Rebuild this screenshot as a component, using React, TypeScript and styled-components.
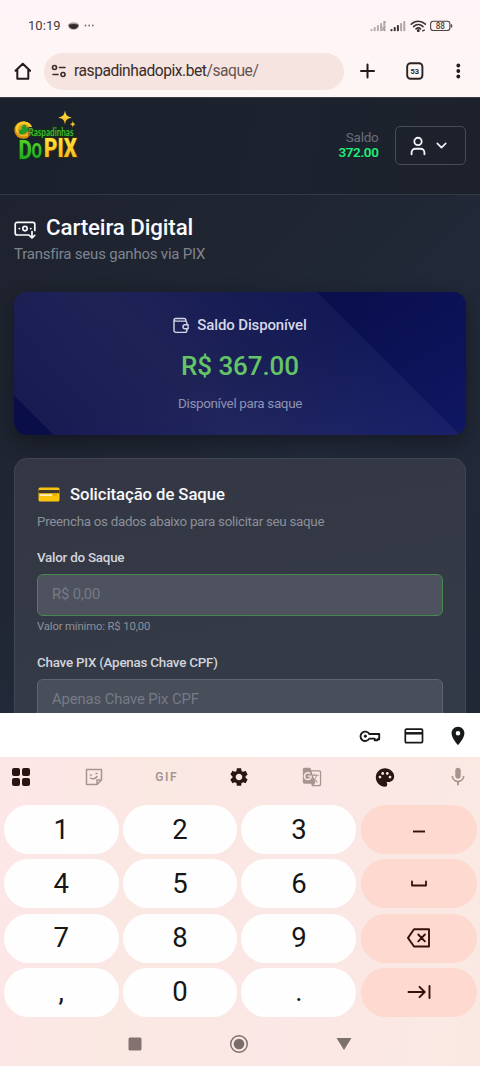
import React from "react";
import styled, { createGlobalStyle } from "styled-components";
import { User, ChevronDown } from "lucide-react";
import { MdLocationOn, MdSettings, MdGTranslate, MdPalette, MdMic } from "react-icons/md";

const GlobalStyle = createGlobalStyle`
  * { box-sizing: border-box; }
  body { margin: 0; font-family: Roboto, "Liberation Sans", sans-serif; }
`;

const Screen = styled.div`
  width: 480px;
  height: 1066px;
  display: flex;
  flex-direction: column;
  overflow: hidden;
  background: #fbe8e4;
`;

/* ---------- status bar and browser toolbar ---------- */
const Chrome = styled.div`
  height: 97px;
  flex: none;
  background: linear-gradient(#fff4f7, #fef6f5);
`;

const StatusBar = styled.div`
  height: 52px;
  display: flex;
  align-items: center;
  padding: 0 27px 0 28px;
  justify-content: space-between;
`;

const StatusGroup = styled.div<{ $gap: number }>`
  display: flex;
  align-items: center;
  gap: ${(p) => p.$gap}px;
`;

const Clock = styled.span`
  font-size: 13px;
  line-height: 16px;
  letter-spacing: 0.05px;
  color: #43383a;
`;

const AddressRow = styled.div`
  height: 38px;
  display: flex;
  align-items: center;
  padding-left: 13px;
`;

const AddressPill = styled.div`
  width: 300px;
  height: 37px;
  margin-left: 11px;
  border-radius: 19px;
  background: #f5e4df;
  display: flex;
  align-items: center;
  padding-left: 7px;
  gap: 7px;
`;

const Url = styled.span`
  font-size: 15.6px;
  letter-spacing: -0.46px;
  line-height: 20px;
  color: #3a2c2b;
`;
const UrlPath = styled.span`
  color: #66534f;
`;

const ToolbarActions = styled.div`
  flex: 1;
  display: flex;
  align-items: center;
  justify-content: space-between;
  padding: 0 18px 0 15px;
`;

/* ---------- web page ---------- */
const Page = styled.main`
  height: 616px;
  flex: none;
  overflow: hidden;
  background: linear-gradient(135deg, #1e222e 0%, #1f2531 35%, #222938 60%, #202735 100%);
`;

const SiteHeader = styled.header`
  height: 98px;
  border-top: 1px solid #3c3d44;
  border-bottom: 1px solid #323844;
  background: linear-gradient(100deg, #1b212c, #1c232e 60%, #1d212c);
  display: flex;
  align-items: flex-start;
  padding: 11px 14px 0;
`;

const HeaderRight = styled.div`
  margin-left: auto;
  margin-top: 17px;
  display: flex;
  align-items: center;
  gap: 16px;
`;

const Balance = styled.div`
  text-align: right;
  font-size: 13.5px;
  line-height: 15px;
  letter-spacing: -0.25px;
  color: #696e79;
  padding-bottom: 1px;
`;
const BalanceValue = styled.div`
  color: #1dee77;
  font-weight: 600;
  letter-spacing: -0.4px;
`;

const UserButton = styled.button`
  width: 71.5px;
  height: 39px;
  border: 1px solid #474c58;
  border-radius: 5px;
  background: transparent;
  color: #f4f5fa;
  display: flex;
  align-items: center;
  gap: 4px;
  padding: 0 0 0 11px;
`;

const Content = styled.div`
  padding: 19px 14px 0;
`;

const TitleRow = styled.div`
  display: flex;
  align-items: center;
  gap: 9px;
  height: 26px;
  color: #fafbff;
`;

const TitleIcon = styled.span`
  display: flex;
  padding-top: 6px;
`;

const Title = styled.h1`
  margin: 0;
  font-size: 22.3px;
  line-height: 26px;
  letter-spacing: -0.1px;
  font-weight: 500;
`;

const Subtitle = styled.p`
  margin: 4px 0 0;
  font-size: 15px;
  line-height: 20px;
  letter-spacing: -0.21px;
  color: #7f8490;
`;

const BalanceCard = styled.section`
  height: 143px;
  margin-top: 28px;
  border-radius: 13px;
  background:
    linear-gradient(45deg, transparent 6.6%, rgba(170, 160, 180, 0.09) 6.7%, rgba(200, 200, 190, 0.11) 38%, rgba(140, 150, 200, 0.07) 74.9%, transparent 75.1%),
    linear-gradient(160deg, transparent 50%, rgba(24, 32, 120, 0.4) 100%),
    linear-gradient(90deg, #0a0e48 0%, #090f4b 60%, #0b1154 100%);
  box-shadow: 0 7px 20px rgba(8, 9, 16, 0.45);
  display: flex;
  flex-direction: column;
  align-items: center;
`;

const BalanceLabel = styled.div`
  display: flex;
  align-items: center;
  gap: 8px;
  margin-top: 23px;
  font-size: 15px;
  line-height: 20px;
  letter-spacing: -0.13px;
  font-weight: 500;
  color: #d5d7e8;
`;
const BalanceAmount = styled.div`
  margin-top: 15px;
  font-size: 26px;
  line-height: 32px;
  letter-spacing: -0.1px;
  font-weight: 500;
  color: #65c466;
`;
const BalanceNote = styled.div`
  margin-top: 12px;
  font-size: 13.5px;
  line-height: 18px;
  letter-spacing: -0.38px;
  color: #8d91b0;
`;

const FormCard = styled.section`
  margin-top: 23px;
  height: 400px;
  border: 1px solid #414651;
  border-radius: 13px;
  background: linear-gradient(170deg, #343743, #343b48 70%);
  padding: 23px 22px 0;
`;

const FormTitleRow = styled.div`
  display: flex;
  align-items: center;
  gap: 10px;
  height: 25px;
  padding-left: 1px;
`;
const FormTitle = styled.h2`
  margin: 0;
  font-size: 16.7px;
  line-height: 25px;
  letter-spacing: -0.07px;
  font-weight: 500;
  color: #f8f9fd;
`;
const FormHint = styled.p`
  margin: 5px 0 0;
  font-size: 13.4px;
  line-height: 20px;
  letter-spacing: -0.3px;
  color: #8b8f9a;
`;
const Label = styled.label<{ $top: number }>`
  display: block;
  margin-top: ${(p) => p.$top}px;
  font-size: 13.4px;
  line-height: 18px;
  letter-spacing: -0.24px;
  font-weight: 500;
  color: #d2d4dc;
`;
const Field = styled.div<{ $active?: boolean }>`
  height: 42px;
  margin-top: 7px;
  border: 1px solid ${(p) => (p.$active ? "#43894e" : "#606571")};
  border-radius: 6px;
  background: ${(p) => (p.$active ? "#4e525e" : "#494e5b")};
  color: #767b86;
  font-size: 14.8px;
  line-height: 38px;
  letter-spacing: -0.1px;
  padding-left: 14px;
`;
const FieldNote = styled.div`
  margin-top: 3px;
  font-size: 11.3px;
  line-height: 16px;
  letter-spacing: -0.14px;
  color: #8d919c;
`;

/* ---------- keyboard ---------- */
const AutofillBar = styled.div`
  height: 44px;
  flex: none;
  background: #fff;
  display: flex;
  align-items: center;
  justify-content: flex-end;
  gap: 23px;
  padding-right: 11px;
  padding-top: 1px;
  color: #17191a;
`;

const Keyboard = styled.div`
  flex: 1;
  background: linear-gradient(100deg, #fde6e7, #fae8e3 30%, #fbe7e5 60%, #fae9e3);
`;

const KeyToolbar = styled.div`
  height: 40px;
  display: flex;
  align-items: center;
  justify-content: space-between;
  padding: 0 11px 0 10px;
`;
const ToolItem = styled.span<{ $dim?: boolean }>`
  width: 22px;
  display: flex;
  justify-content: center;
  color: ${(p) => (p.$dim ? "#a8948f" : "#2b1512")};
`;
const GifLabel = styled.span`
  font-size: 12px;
  font-weight: 600;
  letter-spacing: 1.5px;
`;

const KeyGrid = styled.div`
  display: grid;
  grid-template-columns: 114.5px 114.5px 115px 116px;
  grid-auto-rows: 49px;
  column-gap: 4.2px;
  row-gap: 5.3px;
  padding: 8px 0 0 4px;
`;
const Key = styled.div<{ $accent?: boolean }>`
  border-radius: 25px;
  background: ${(p) => (p.$accent ? "#fdd9cf" : "#fffefe")};
  color: ${(p) => (p.$accent ? "#35110c" : "#161617")};
  display: flex;
  align-items: center;
  justify-content: center;
  font-size: 27.5px;
  line-height: 48px;
`;

const NavBar = styled.div`
  height: 49px;
  margin-top: 3px;
  display: flex;
  align-items: center;
  justify-content: center;
  gap: 87px;
  padding-right: 1px;
`;

const stroke = {
  fill: "none",
  stroke: "currentColor",
  strokeLinecap: "round" as const,
  strokeLinejoin: "round" as const,
};

const SignalIcon = ({ dim }: { dim?: boolean }) => (
  <svg width="17" height="12" viewBox="0 0 17 12">
    {[0, 1, 2, 3, 4].map((i) => (
      <rect
        key={i}
        x={0.5 + i * 3.2}
        y={9 - i * 2}
        width="2"
        height={2.2 + i * 2}
        rx="0.8"
        fill={dim ? "#b9abae" : i < 3 ? "#3b3033" : "#b3a5a8"}
      />
    ))}
    {dim && <path d="M11.5 6.5l4 4.5M15.5 6.5l-4 4.5M13.5 2h2.5" stroke="#978a8d" strokeWidth="0.9" />}
  </svg>
);

const WifiIcon = () => (
  <svg width="17" height="12" viewBox="0 0 17 12" {...stroke} stroke="#3b3033" strokeWidth="1.6">
    <path d="M1.2 4.2C5.2 .2 11.2 .2 15.4 4.2M3.6 6.6c2.8-2.7 6.6-2.7 9.4 0M6 8.9c1.4-1.3 3.2-1.3 4.6 0" />
    <circle cx="8.3" cy="10.6" r="0.7" fill="#3b3033" />
    <path d="M12.6 10.8l1.8-.6" strokeWidth="1.3" />
  </svg>
);

const BatteryIcon = () => (
  <svg width="23" height="12" viewBox="0 0 23 12">
    <rect x="0.6" y="1.3" width="19.3" height="9.2" rx="2.8" fill="none" stroke="#4a3f42" strokeWidth="1.1" />
    <rect x="20.8" y="4.3" width="1.4" height="3.2" rx="0.6" fill="#4a3f42" />
    <text x="10.3" y="8.8" fontFamily="Roboto, sans-serif" fontSize="8.2" fontWeight="500" textAnchor="middle" fill="#4a3f42">
      88
    </text>
  </svg>
);

const Logo = () => (
  <svg width="72" height="60" viewBox="0 0 72 60">
    <defs>
      <linearGradient id="gold" x1="0" y1="0" x2="0" y2="1">
        <stop offset="0" stopColor="#fff04a" />
        <stop offset="1" stopColor="#f3ac0c" />
      </linearGradient>
      <linearGradient id="leaf" x1="0" y1="0" x2="0" y2="1">
        <stop offset="0" stopColor="#63dc2c" />
        <stop offset="1" stopColor="#149b1c" />
      </linearGradient>
    </defs>
    <ellipse cx="9.3" cy="21" rx="9" ry="8.8" fill="#d98e10" />
    <ellipse cx="10" cy="19.8" rx="8.2" ry="7.4" fill="#f8cf2c" />
    <ellipse cx="10" cy="20.8" rx="6.2" ry="5.8" fill="#dd9d17" />
    <path d="M9 16.500c2-2 4 0 3 2 3-1 4 2 2 4l-4 2.500c-3 1-6 0-5-2.500s2-2 3-2c-1-2 0-3 1-4z" fill="#239b28" />
    <path d="M51 1.500c.8 4.700 2 6 6.800 7-4.800 1.100-6 2.300-6.800 7-.8-4.700-2-5.900-6.800-7 4.800-1 6-2.300 6.800-7z" fill="url(#gold)" />
    <path d="M58.800 12c.4 2.200 1 2.800 3 3.200-2 .4-2.600 1-3 3.200-.4-2.200-1-2.800-3-3.200 2-.4 2.600-1 3-3.200z" fill="#f8c526" />
    <text x="14.5" y="27" fontFamily="Lato, sans-serif" fontSize="11.5" fontWeight="700" textLength="45" lengthAdjust="spacingAndGlyphs" fill="#43b82c" stroke="#0c3214" strokeWidth="1.8" paintOrder="stroke">
      Raspadinhas
    </text>
    <text x="4.5" y="49.5" fontFamily="Roboto, sans-serif" fontSize="25.500" fontWeight="800" textLength="13.500" lengthAdjust="spacingAndGlyphs" fill="url(#leaf)" stroke="#06351b" strokeWidth="2" paintOrder="stroke">
      D
    </text>
    <text x="17.500" y="48.500" fontFamily="Roboto, sans-serif" fontSize="20" fontWeight="800" textLength="10.500" lengthAdjust="spacingAndGlyphs" fill="url(#leaf)" stroke="#06351b" strokeWidth="2" paintOrder="stroke">
      O
    </text>
    <text x="30" y="48.3" fontFamily="Roboto, sans-serif" fontSize="25.5" fontWeight="900" textLength="33" lengthAdjust="spacingAndGlyphs" fill="url(#gold)" stroke="#3c2c0b" strokeWidth="2" paintOrder="stroke">
      PIX
    </text>
  </svg>
);

const HomeIcon = () => (
  <svg width="20" height="20" viewBox="0 0 20 20" {...stroke} strokeWidth="2" color="#211b1c">
    <path d="M2.500 9.800L9.800 2.700l7.300 7.100M4.300 8.500v9.300h11V8.500" />
  </svg>
);

const SiteInfoIcon = () => (
  <svg width="16" height="14" viewBox="0 0 16 14" {...stroke} strokeWidth="1.600" color="#3a2c2b">
    <circle cx="3.500" cy="3.500" r="2" />
    <path d="M8.500 3.500h5.500M2 10.500h5" />
    <circle cx="12" cy="10.500" r="2" />
  </svg>
);

const WithdrawIcon = () => (
  <svg width="23" height="19" viewBox="0 0 23 19" {...stroke} strokeWidth="1.700">
    <path d="M14.500 14H3.200a2 2 0 0 1-2-2V3.300a2 2 0 0 1 2-2h15.600a2 2 0 0 1 2 2v6.200" />
    <circle cx="11" cy="7.600" r="2.200" />
    <path d="M5.300 7.600h.1M16.700 7.600h.1" strokeWidth="1.900" />
    <path d="M18 10.500v6.300M15.300 14.300l2.700 2.700 2.700-2.700" />
  </svg>
);

const WalletIcon = () => (
  <svg width="16" height="17" viewBox="0 0 16 17" {...stroke} strokeWidth="1.400">
    <path d="M13.800 7.300V6a1.900 1.900 0 0 0-1.900-1.900H2.600A1.600 1.600 0 0 1 1 2.700 1.600 1.600 0 0 1 2.600 1.500h8.600a1.700 1.700 0 0 1 1.700 1.700v.9M1 2.900v10.600a1.900 1.900 0 0 0 1.900 1.900h9a1.900 1.900 0 0 0 1.900-1.900v-1.300" />
    <path d="M12 7.700h3.100v4H12a2 2 0 0 1 0-4z" />
  </svg>
);

const CardIcon = () => (
  <svg width="22" height="15" viewBox="0 0 22 15">
    <rect x="0.500" y="0.500" width="21" height="14" rx="1.500" fill="#fbc50e" />
    <rect x="0.500" y="3" width="21" height="3.200" fill="#3f3933" />
    <rect x="2" y="7.300" width="12" height="1.600" fill="#fff3cf" />
    <rect x="15" y="7.300" width="4" height="1.300" fill="#dba40a" />
  </svg>
);

const KeyIcon = () => (
  <svg width="22" height="14" viewBox="0 0 22 14" {...stroke} strokeWidth="1.900">
    <path d="M10.300 5h9.900v5.200h-1.700v1h-2.800v-1.600h-5.400a4.700 4.700 0 1 1 0-4.600z" />
    <circle cx="6.300" cy="7.200" r="1.100" fill="currentColor" strokeWidth="1" />
  </svg>
);

const PaymentIcon = () => (
  <svg width="20" height="16" viewBox="0 0 20 16" {...stroke} strokeWidth="1.700">
    <rect x="1.300" y="1.200" width="17.200" height="13.400" rx="1" />
    <path d="M1.300 5.300h17.200" strokeWidth="2.500" strokeLinecap="butt" />
  </svg>
);

export default function App() {
  return (
    <>
      <GlobalStyle />
      <Screen>
        <Chrome>
          <StatusBar>
            <StatusGroup $gap={7}>
              <Clock>10:19</Clock>
              <svg width="28" height="10" viewBox="0 0 28 10">
                <ellipse cx="5.500" cy="5" rx="5.400" ry="3.800" fill="#a89c9e" />
                <path d="M0.500 3.700c3-1 7-1 10.200 0-1 3-2.600 4.300-5 4.300S1.500 6.700.5 3.700z" fill="#35292c" />
                <circle cx="17.500" cy="4.500" r="0.900" fill="#776b6d" />
                <circle cx="21.200" cy="4.500" r="0.900" fill="#776b6d" />
                <circle cx="24.900" cy="4.500" r="0.900" fill="#776b6d" />
              </svg>
            </StatusGroup>
            <StatusGroup $gap={3}>
              <SignalIcon dim />
              <SignalIcon />
              <WifiIcon />
              <BatteryIcon />
            </StatusGroup>
          </StatusBar>
          <AddressRow>
            <HomeIcon />
            <AddressPill>
              <SiteInfoIcon />
              <Url>
                raspadinhadopix.bet<UrlPath>/saque/</UrlPath>
              </Url>
            </AddressPill>
            <ToolbarActions>
              <svg width="17" height="16" viewBox="0 0 17 16" {...stroke} strokeWidth="2" color="#211b1c">
                <path d="M8.500 1.500v13M2 8h13" />
              </svg>
              <svg width="18" height="18" viewBox="0 0 18 18">
                <rect x="1.200" y="1.200" width="15.200" height="15.600" rx="3.400" fill="none" stroke="#2a2223" strokeWidth="1.900" />
                <text x="8.800" y="12" fontFamily="Roboto, sans-serif" fontSize="8" fontWeight="700" textLength="8.600" lengthAdjust="spacingAndGlyphs" textAnchor="middle" fill="#2a2223">
                  53
                </text>
              </svg>
              <svg width="8" height="16" viewBox="0 0 8 16" fill="#211b1c">
                <circle cx="4.300" cy="2.500" r="1.900" />
                <circle cx="4.300" cy="8" r="1.900" />
                <circle cx="4.300" cy="13.500" r="1.900" />
              </svg>
            </ToolbarActions>
          </AddressRow>
        </Chrome>

        <Page>
          <SiteHeader>
            <Logo />
            <HeaderRight>
              <Balance>
                Saldo
                <BalanceValue>372.00</BalanceValue>
              </Balance>
              <UserButton>
                <User size={22} strokeWidth={2} />
                <ChevronDown size={17} strokeWidth={2.2} />
              </UserButton>
            </HeaderRight>
          </SiteHeader>
          <Content>
            <TitleRow>
              <TitleIcon>
                <WithdrawIcon />
              </TitleIcon>
              <Title>Carteira Digital</Title>
            </TitleRow>
            <Subtitle>Transfira seus ganhos via PIX</Subtitle>
            <BalanceCard>
              <BalanceLabel>
                <WalletIcon />
                Saldo Disponível
              </BalanceLabel>
              <BalanceAmount>R$ 367.00</BalanceAmount>
              <BalanceNote>Disponível para saque</BalanceNote>
            </BalanceCard>
            <FormCard>
              <FormTitleRow>
                <CardIcon />
                <FormTitle>Solicitação de Saque</FormTitle>
              </FormTitleRow>
              <FormHint>Preencha os dados abaixo para solicitar seu saque</FormHint>
              <Label $top={17}>Valor do Saque</Label>
              <Field $active>R$ 0,00</Field>
              <FieldNote>Valor mínimo: R$ 10,00</FieldNote>
              <Label $top={19}>Chave PIX (Apenas Chave CPF)</Label>
              <Field>Apenas Chave Pix CPF</Field>
            </FormCard>
          </Content>
        </Page>

        <AutofillBar>
          <KeyIcon />
          <PaymentIcon />
          <MdLocationOn size={22} />
        </AutofillBar>

        <Keyboard>
          <KeyToolbar>
            <ToolItem>
              <svg width="20" height="20" viewBox="0 0 20 20" fill="currentColor">
                <rect x="1" y="1" width="8" height="8" rx="2" />
                <rect x="11" y="1" width="8" height="8" rx="2" />
                <rect x="1" y="11" width="8" height="8" rx="2" />
                <rect x="11" y="11" width="8" height="8" rx="2" />
              </svg>
            </ToolItem>
            <ToolItem $dim>
              <svg width="18" height="18" viewBox="0 0 18 18" {...stroke} strokeWidth="1.500">
                <path d="M1.500 1.500h15v10.500l-4.500 4.500H1.500zM16.500 12H12v4.500" />
                <path d="M5.500 7h.8M11 5.500h1M5.500 10c2 1.500 5 1 6.500-1.500" />
              </svg>
            </ToolItem>
            <ToolItem $dim>
              <GifLabel>GIF</GifLabel>
            </ToolItem>
            <ToolItem>
              <MdSettings size={22} />
            </ToolItem>
            <ToolItem $dim>
              <MdGTranslate size={20} />
            </ToolItem>
            <ToolItem>
              <MdPalette size={23} />
            </ToolItem>
            <ToolItem $dim>
              <MdMic size={22} />
            </ToolItem>
          </KeyToolbar>
          <KeyGrid>
            <Key>1</Key>
            <Key>2</Key>
            <Key>3</Key>
            <Key $accent>
              <svg width="14" height="6" viewBox="0 0 14 6" {...stroke} strokeWidth="1.900" strokeLinecap="butt">
                <path d="M1 4.500h12" />
              </svg>
            </Key>
            <Key>4</Key>
            <Key>5</Key>
            <Key>6</Key>
            <Key $accent>
              <svg width="16" height="8" viewBox="0 0 16 8" {...stroke} strokeWidth="1.800">
                <path d="M1 1.500v4h14v-4" />
              </svg>
            </Key>
            <Key>7</Key>
            <Key>8</Key>
            <Key>9</Key>
            <Key $accent>
              <svg width="24" height="20" viewBox="0 0 24 20" {...stroke} strokeWidth="1.900">
                <path d="M7 1.300h15v17.200H7L1 9.900zM11.300 6.500l6.600 6.800M17.900 6.500l-6.600 6.800" />
              </svg>
            </Key>
            <Key>,</Key>
            <Key>0</Key>
            <Key>.</Key>
            <Key $accent>
              <svg width="24" height="14" viewBox="0 0 24 14" {...stroke} strokeWidth="1.900">
                <path d="M1.500 7h16M12.500 1.800L17.700 7l-5.200 5.200M22.500 1v12" />
              </svg>
            </Key>
          </KeyGrid>
          <NavBar>
            <svg width="14" height="14" viewBox="0 0 14 14">
              <rect x="0.500" y="0.500" width="13" height="13" rx="1.500" fill="#827270" />
            </svg>
            <svg width="20" height="20" viewBox="0 0 20 20">
              <circle cx="10" cy="10" r="8.300" fill="none" stroke="#7b6e6a" strokeWidth="1.400" />
              <circle cx="10" cy="10" r="5.300" fill="#7b6e6a" />
            </svg>
            <svg width="16" height="14" viewBox="0 0 16 14">
              <path d="M0.500 1h15L8 13z" fill="#7d716b" />
            </svg>
          </NavBar>
        </Keyboard>
      </Screen>
    </>
  );
}
